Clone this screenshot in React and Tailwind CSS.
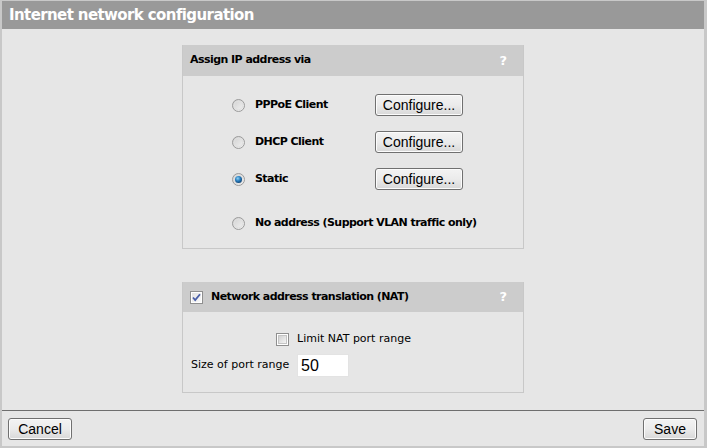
import React from "react";

const V = { fontFamily: '"DejaVu Sans", Verdana, sans-serif' };
const A = { fontFamily: '"Liberation Sans", Arial, sans-serif' };

function Radio({ checked }) {
  return (
    <svg width="13" height="13" viewBox="0 0 13 13" className="shrink-0">
      <defs>
        <linearGradient id="rg" x1="0" y1="0" x2="1" y2="1">
          <stop offset="0" stopColor="#cfcfcf" />
          <stop offset="1" stopColor="#f4f4f4" />
        </linearGradient>
        <radialGradient id="rb" cx="0.4" cy="0.35" r="0.7">
          <stop offset="0" stopColor="#8fd3f5" />
          <stop offset="0.5" stopColor="#2a7fc0" />
          <stop offset="1" stopColor="#0d3f6e" />
        </radialGradient>
      </defs>
      <circle cx="6.5" cy="6.5" r="6" fill="url(#rg)" stroke="#9a9a9a" strokeWidth="1" />
      <circle cx="6.5" cy="6.5" r="4.3" fill="none" stroke="#e0e0e0" strokeWidth="1" />
      {checked && <circle cx="6.5" cy="6.5" r="3.5" fill="url(#rb)" />}
    </svg>
  );
}

function Check({ checked }) {
  return (
    <svg width="13" height="13" viewBox="0 0 13 13" className="shrink-0">
      <defs>
        <linearGradient id="cg" x1="0" y1="0" x2="1" y2="1">
          <stop offset="0" stopColor="#cfcfcf" />
          <stop offset="1" stopColor="#f6f6f6" />
        </linearGradient>
      </defs>
      <rect x="0.5" y="0.5" width="12" height="12" fill="#ffffff" stroke="#8f8f8f" />
      {checked ? (
        <>
          <rect x="2" y="2" width="9" height="9" fill="url(#cg)" opacity="0.6" />
          <path d="M3 6.5 L5.2 9 L10 3.2" fill="none" stroke="#4a5fa8" strokeWidth="1.8" />
        </>
      ) : (
        <rect x="2.5" y="2.5" width="8" height="8" fill="url(#cg)" stroke="#c4c4c4" />
      )}
    </svg>
  );
}

function Btn({ children, className = "" }) {
  return (
    <button
      style={A}
      className={
        "h-[22px] border border-[#707070] rounded-[3px] bg-gradient-to-b from-[#f3f3f3] via-[#ebebeb] to-[#d8d8d8] text-[14px] leading-none text-black flex items-center justify-center shadow-[inset_0_0_0_1px_#fcfcfc] " +
        className
      }
    >
      {children}
    </button>
  );
}

function Header({ children, h = "h-[31px]" }) {
  return (
    <div className={h + " bg-[#cccccc] flex items-center justify-between pl-[7px] pr-[16px]"}>
      <div className="flex items-center">{children}</div>
      <span style={V} className="text-white font-bold text-[13px]">?</span>
    </div>
  );
}

const B = "font-bold text-[11px] tracking-[-0.55px] text-black";

export default function App() {
  const rows = [
    { label: "PPPoE Client", btn: true },
    { label: "DHCP Client", btn: true },
    { label: "Static", btn: true, checked: true },
  ];
  return (
    <div className="w-[707px] h-[448px] bg-[#e6e6e6] border-t border-l-2 border-r-[3px] border-b-2 border-[#c8c8c8] flex flex-col overflow-hidden">
      <div className="h-[28px] shrink-0 bg-[#999999] flex items-center pl-[7px]">
        <span style={V} className="text-white font-bold text-[15px] tracking-[-0.6px]">Internet network configuration</span>
      </div>
      <div className="flex-1 flex flex-col items-center pt-[16px]">
        <div className="w-[342px] border border-[#c8c8c8] border-t-0">
          <Header>
            <span style={V} className={B}>Assign IP address via</span>
          </Header>
          <div className="pt-[18px] pb-[14px] pl-[49px] flex flex-col">
            {rows.map((r, i) => (
              <div key={i} className="h-[22px] flex items-center mb-[15px]">
                <Radio checked={r.checked} />
                <span style={V} className={"ml-[10px] w-[120px] " + B}>{r.label}</span>
                <Btn className="w-[88px]">Configure...</Btn>
              </div>
            ))}
            <div className="h-[22px] flex items-center mt-[7px]">
              <Radio />
              <span style={V} className={"ml-[10px] " + B}>No address (Support VLAN traffic only)</span>
            </div>
          </div>
        </div>
        <div className="w-[342px] border border-[#c8c8c8] border-t-0 mt-[33px]">
          <Header h="h-[30px]">
            <Check checked />
            <span style={V} className={"ml-[8px] " + B}>Network address translation (NAT)</span>
          </Header>
          <div className="pt-[20px] pb-[15px] flex flex-col">
            <div className="h-[14px] flex items-center pl-[93px]">
              <Check />
              <span style={V} className="ml-[8px] text-[11px] text-black">Limit NAT port range</span>
            </div>
            <div className="flex items-center pl-[8px] mt-[8px]">
              <span style={V} className="w-[106px] text-[11px] text-black">Size of port range</span>
              <div style={A} className="w-[52px] h-[23px] bg-white border border-[#e3e3e3] text-[16px] text-black flex items-center pl-[3px]">50</div>
            </div>
          </div>
        </div>
      </div>
      <div className="h-px bg-[#6e6e6e] shrink-0" />
      <div className="h-[35px] shrink-0 flex items-center justify-between pl-[6px] pr-[7px]">
        <Btn className="w-[64px]">Cancel</Btn>
        <Btn className="w-[54px]">Save</Btn>
      </div>
    </div>
  );
}
